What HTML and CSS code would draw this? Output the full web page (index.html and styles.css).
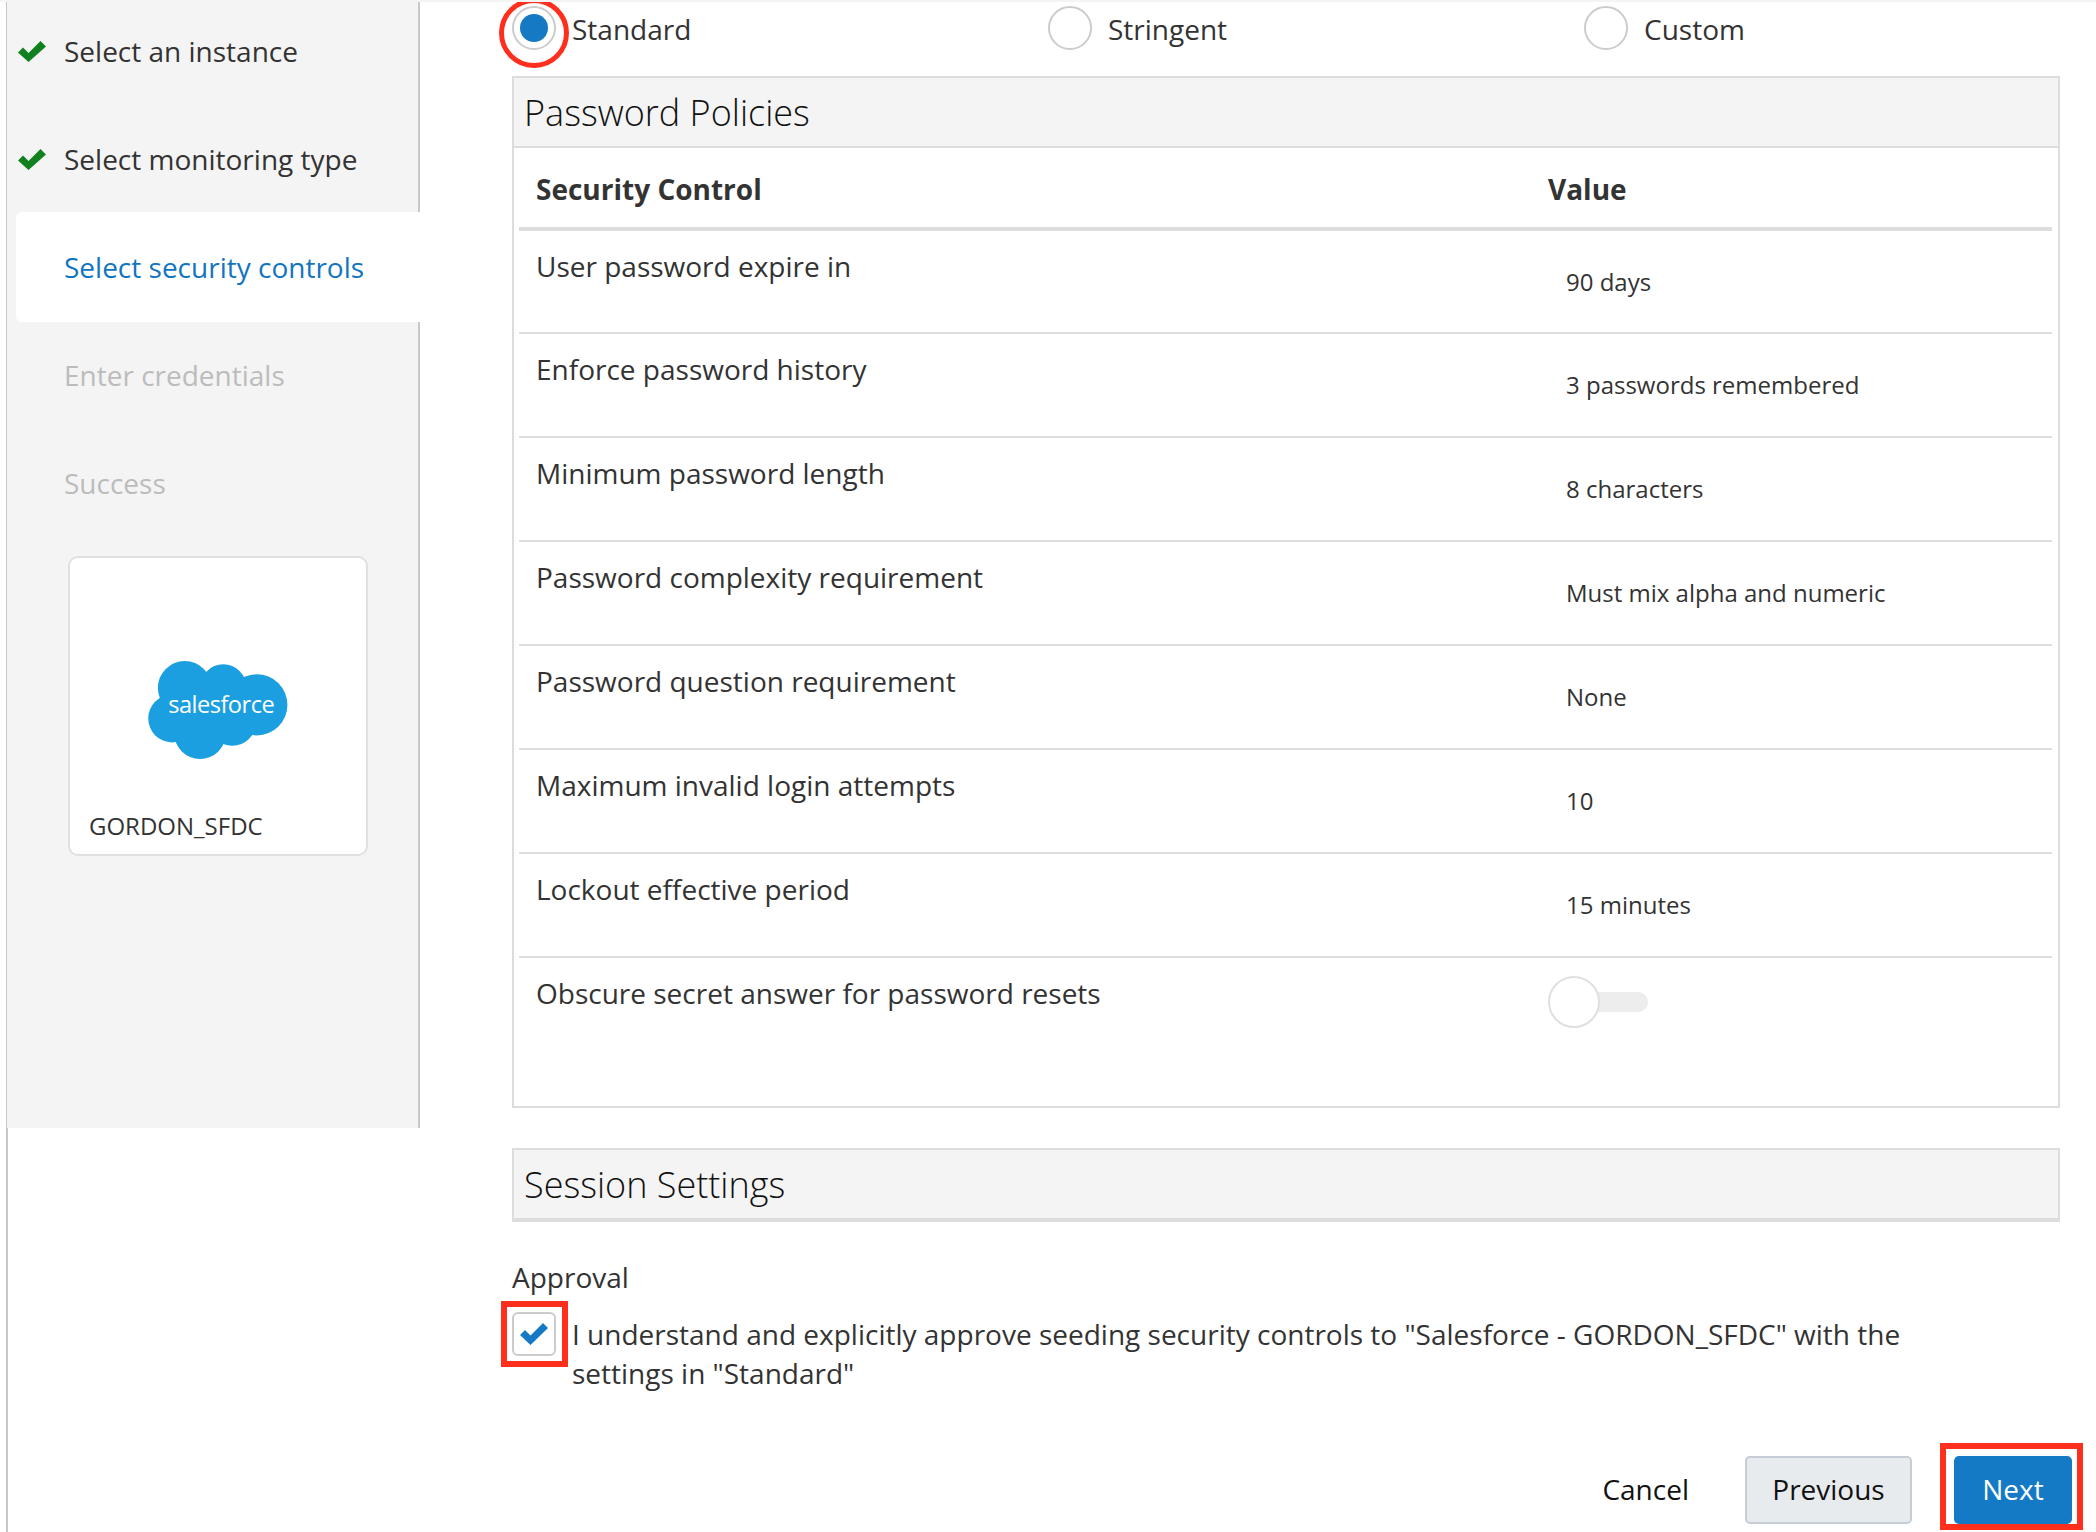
FILE: index.html
```html
<!DOCTYPE html>
<html lang="en">
<head>
<meta charset="utf-8">
<title>Select security controls</title>
<link rel="stylesheet" href="styles.css">
</head>
<body>
<div class="page">
  <aside class="sidebar">
    <ol class="steps">
      <li class="step done"><svg class="tick" viewBox="0 0 28 21"><path d="M0 11.5 5 6.5 10.5 12 22.5 0 28 5.5 10.5 21Z"/></svg>Select an instance</li>
      <li class="step done"><svg class="tick" viewBox="0 0 28 21"><path d="M0 11.5 5 6.5 10.5 12 22.5 0 28 5.5 10.5 21Z"/></svg>Select monitoring type</li>
      <li class="step active">Select security controls</li>
      <li class="step muted">Enter credentials</li>
      <li class="step muted">Success</li>
    </ol>
    <div class="card">
      <svg class="cloud" viewBox="324 362 420 295">
        <g fill="#1b9fe0">
          <circle cx="434" cy="443" r="81"/>
          <circle cx="550" cy="442" r="70"/>
          <circle cx="651" cy="494" r="92"/>
          <circle cx="396" cy="535" r="72"/>
          <circle cx="480" cy="579" r="78"/>
          <circle cx="577" cy="545" r="72"/>
          <rect x="400" y="440" width="250" height="120"/>
        </g>
        <text class="cloud-text" x="384" y="518">salesforce</text>
      </svg>
      <div class="card-name">GORDON_SFDC</div>
    </div>
  </aside>

  <main class="main">
    <div class="modes">
      <div class="mode"><span class="radio checked"></span><span class="mode-label">Standard</span></div>
      <div class="mode"><span class="radio"></span><span class="mode-label">Stringent</span></div>
      <div class="mode"><span class="radio"></span><span class="mode-label">Custom</span></div>
    </div>

    <section class="panel">
      <h2 class="panel-title">Password Policies</h2>
      <div class="panel-body">
        <table class="policy">
          <thead>
            <tr><th class="col-a">Security Control</th><th>Value</th></tr>
          </thead>
          <tbody>
            <tr><td>User password expire in</td><td class="val">90 days</td></tr>
            <tr><td>Enforce password history</td><td class="val">3 passwords remembered</td></tr>
            <tr><td>Minimum password length</td><td class="val">8 characters</td></tr>
            <tr><td>Password complexity requirement</td><td class="val">Must mix alpha and numeric</td></tr>
            <tr><td>Password question requirement</td><td class="val">None</td></tr>
            <tr><td>Maximum invalid login attempts</td><td class="val">10</td></tr>
            <tr><td>Lockout effective period</td><td class="val">15 minutes</td></tr>
            <tr class="last"><td>Obscure secret answer for password resets</td><td><span class="toggle"><span class="knob"></span></span></td></tr>
          </tbody>
        </table>
      </div>
    </section>

    <section class="panel-closed">
      <h2 class="panel-title closed">Session Settings</h2>
    </section>

    <div class="approval-label">Approval</div>
    <div class="approval">
      <span class="checkbox"><svg viewBox="0 0 28 22"><path d="M0 12 5 7 10.5 12.5 23 0 28 5 10.5 22Z"/></svg></span>
      <p class="approval-text">I understand and explicitly approve seeding security controls to "Salesforce - GORDON_SFDC" with the settings in "Standard"</p>
    </div>

    <div class="actions">
      <span class="cancel">Cancel</span>
      <button class="btn btn-secondary">Previous</button>
      <button class="btn btn-primary">Next</button>
    </div>
  </main>

  <div class="mark mark-radio"></div>
  <div class="mark mark-check"></div>
  <div class="mark mark-next"></div>
</div>
</body>
</html>
```

FILE: styles.css
```css
* { box-sizing: border-box; }
html, body { margin: 0; padding: 0; background: #fff; }
body { font-family: "Open Sans", "Noto Sans", sans-serif; color: #333; font-size: 28px; }

.page {
  position: relative;
  width: 2096px;
  height: 1532px;
  overflow: hidden;
  display: flex;
  align-items: flex-start;
  margin: 0;
  border-top: 2px solid #f4f4f4;
}
.page::before {
  content: "";
  position: absolute;
  left: 6px; top: 0; bottom: 0;
  width: 2px;
  background: #c8c8c8;
}

.sidebar {
  flex: none;
  width: 413px;
  height: 1126px;
  margin-left: 7px;
  background: #f4f4f4;
  border-right: 2px solid #c8c8c8;
  position: relative;
}
.steps { list-style: none; margin: -5px 0 0; padding: 0; }
.step {
  height: 108px;
  display: flex;
  align-items: center;
  padding-left: 57px;
  position: relative;
  line-height: 38px;
}
.step.done { color: #333; }
.step.muted { color: #bcbcbc; }
.step.active {
  height: 110px;
  margin: -1px -2px -1px 9px;
  padding-left: 48px;
  background: #fff;
  color: #1275c0;
  border-radius: 6px 0 0 6px;
}
.tick {
  position: absolute;
  left: 11px;
  top: 44px;
  width: 28px;
  height: 21px;
  fill: #11801e;
}

.card {
  width: 300px;
  height: 300px;
  margin: 19px 0 0 61px;
  background: #fff;
  border: 2px solid #e0e0e0;
  border-radius: 10px;
  display: flex;
  flex-direction: column;
  padding: 103px 0 0 19px;
}
.cloud { width: 140px; height: 98px; margin-left: 59px; flex: none; display: block; }
.cloud-text { font-family: "Open Sans", sans-serif; font-size: 71px; fill: #fff; letter-spacing: -1.5px; }
.card-name { margin-top: 50px; font-size: 24px; line-height: 33px; color: #333; }

.main { flex: none; width: 1676px; padding: 0 37px 0 92px; }

.modes { display: flex; height: 74px; padding-top: 4px; }
.mode {
  flex: none;
  width: 536px;
  display: flex;
  align-items: flex-start;
  gap: 16px;
  color: #333;
}
.mode-label { line-height: 46px; }
.radio {
  flex: none;
  width: 44px;
  height: 44px;
  border: 2px solid #ccc;
  border-radius: 50%;
  background: #fff;
  position: relative;
}
.radio.checked::after {
  content: "";
  position: absolute;
  left: 6px; top: 6px;
  width: 28px; height: 28px;
  border-radius: 50%;
  background: #1579c4;
}

.panel { width: 1548px; height: 1032px; border: 2px solid #ddd; }
.panel-title {
  margin: 0;
  height: 70px;
  padding-left: 10px;
  background: #f4f4f4;
  border-bottom: 2px solid #ddd;
  font-weight: 300;
  font-size: 36px;
  line-height: 69px;
  color: #111;
}
.panel-body { padding: 0 6px 0 5px; }
.policy { width: 1533px; border-collapse: collapse; table-layout: fixed; }
.policy th {
  height: 81px;
  padding: 3px 0 0 17px;
  text-align: left;
  font-weight: 700;
  border-bottom: 4px solid #ddd;
  color: #333;
}
.policy .col-a { width: 1012px; }
.policy td {
  height: 104px;
  padding: 16px 0 0 17px;
  vertical-align: top;
  line-height: 38px;
  border-bottom: 2px solid #ddd;
}
.policy td.val { font-size: 24px; padding: 32px 0 0 35px; line-height: 38px; }
.policy .last td { border-bottom: 0; }

.toggle {
  display: block;
  position: relative;
  width: 100px;
  height: 20px;
  margin-top: 18px;
  background: #ededed;
  border-radius: 10px;
}
.knob {
  position: absolute;
  left: 0;
  top: -16px;
  width: 52px;
  height: 52px;
  border: 2px solid #e0e0e0;
  border-radius: 50%;
  background: #fff;
}

.panel-closed { margin-top: 40px; width: 1548px; }
.panel-title.closed {
  height: 74px;
  border: 2px solid #ddd;
  border-bottom-width: 4px;
  padding-left: 10px;
}

.approval-label { margin-top: 36px; line-height: 38px; }
.approval { display: flex; gap: 16px; margin-top: 16px; }
.checkbox {
  flex: none;
  width: 44px;
  height: 44px;
  border: 2px solid #ccc;
  border-radius: 6px;
  background: #fff;
  display: flex;
  align-items: center;
  justify-content: center;
}
.checkbox svg { width: 28px; height: 22px; fill: #1579c4; }
.approval-text { margin: 3px 0 0; width: 1400px; line-height: 39px; }

.actions {
  position: absolute;
  top: 1454px;
  right: 24px;
  display: flex;
  align-items: center;
}
.cancel { color: #111; margin-right: 56px; padding-bottom: 2px; }
.btn {
  font: inherit;
  height: 68px;
  border-radius: 5px;
  padding: 0 0 3px;
  text-align: center;
}
.btn-secondary { width: 167px; background: #e8ebee; border: 2px solid #c5ced6; color: #111; margin-right: 42px; padding-bottom: 3px; }
.btn-primary { width: 118px; background: #147ac6; border: 0; color: #fff; }

.mark { position: absolute; border: 6px solid #ff2f1e; pointer-events: none; }
.mark-radio { left: 499px; top: -4px; width: 70px; height: 70px; border-width: 5px; border-radius: 50%; }
.mark-check { left: 501px; top: 1299px; width: 67px; height: 66px; }
.mark-next { left: 1940px; top: 1441px; width: 143px; height: 87px; }
```
